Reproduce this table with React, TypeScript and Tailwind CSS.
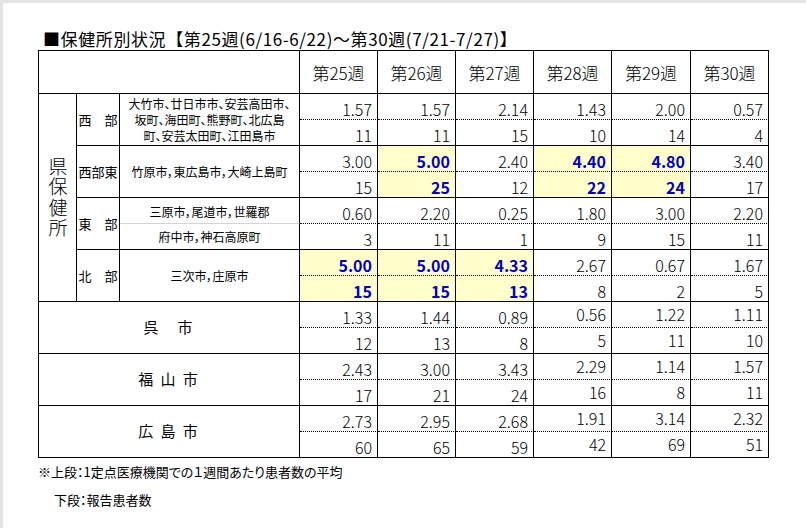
import React from "react";

type G = { top: string[]; bot: string[]; hl: number[] };

const seibu: G = { top: ["1.57", "1.57", "2.14", "1.43", "2.00", "0.57"], bot: ["11", "11", "15", "10", "14", "4"], hl: [] };
const seibuHigashi: G = { top: ["3.00", "5.00", "2.40", "4.40", "4.80", "3.40"], bot: ["15", "25", "12", "22", "24", "17"], hl: [1, 3, 4] };
const toubu: G = { top: ["0.60", "2.20", "0.25", "1.80", "3.00", "2.20"], bot: ["3", "11", "1", "9", "15", "11"], hl: [] };
const hokubu: G = { top: ["5.00", "5.00", "4.33", "2.67", "0.67", "1.67"], bot: ["15", "15", "13", "8", "2", "5"], hl: [0, 1, 2] };
const kure: G = { top: ["1.33", "1.44", "0.89", "0.56", "1.22", "1.11"], bot: ["12", "13", "8", "5", "11", "10"], hl: [] };
const fukuyama: G = { top: ["2.43", "3.00", "3.43", "2.29", "1.14", "1.57"], bot: ["17", "21", "24", "16", "8", "11"], hl: [] };
const hiroshima: G = { top: ["2.73", "2.95", "2.68", "1.91", "3.14", "2.32"], bot: ["60", "65", "59", "42", "69", "51"], hl: [] };

function V({ v, top, hl, up }: { v: string; top: boolean; hl: boolean; up: boolean }) {
  return (
    <div
      className={`flex justify-end border-r border-b border-black pr-[5px] text-[16px] leading-[20px] ${up ? "pt-[2px]" : "pt-[5px]"} ${top ? "[border-bottom-style:dotted]" : ""} ${hl ? "bg-[#ffffcc] font-bold text-[#0000cc]" : "font-light text-black"}`}
    >
      {v}
    </div>
  );
}

function Row({ g, top, lower }: { g: G; top: boolean; lower?: boolean }) {
  const vals = top ? g.top : g.bot;
  return (
    <>
      {vals.map((v, i) => (
        <V key={i} v={v} top={top} hl={g.hl.includes(i)} up={!!lower && i >= 3} />
      ))}
    </>
  );
}

const label = "flex items-center justify-center border-r border-b border-black";
const ctext = "flex items-center justify-center border-r border-b border-black text-center text-[12px] leading-[16px] [font-feature-settings:'palt']";

function City({ name, g }: { name: React.ReactNode; g: G }) {
  return (
    <>
      <div className={`${label} col-span-3 row-span-2 text-[15px] tracking-[2px]`}>{name}</div>
      <Row g={g} top lower />
      <Row g={g} top={false} lower />
    </>
  );
}

export default function App() {
  const weeks = ["第25週", "第26週", "第27週", "第28週", "第29週", "第30週"];
  return (
    <div className="w-[806px] h-[528px] overflow-hidden bg-white border-t-[3px] border-l-[3px] border-[#e4e4e4] font-['Noto_Sans_CJK_JP',sans-serif] text-black">
      <div className="pl-[35px] pt-[25px]">
        <div className="h-[22px] pl-[5px] text-[17px] leading-[22px] tracking-[0.6px] whitespace-nowrap">
          ■保健所別状況【第25週(6/16-6/22)～第30週(7/21-7/27)】
        </div>
        <div className="grid w-[731px] grid-cols-[38px_43px_180px_78px_78px_78px_78px_79px_78px] grid-rows-[43px_repeat(14,26px)] border-l border-t border-black">
          <div className="col-span-3 border-r border-b border-black" />
          {weeks.map((w) => (
            <div key={w} className={`${label} pt-[2px] text-[17px] font-light`}>
              {w}
            </div>
          ))}

          <div className={`${label} row-span-8 text-[19px] font-light`}>
            <span className="[writing-mode:vertical-rl] leading-[22px] tracking-[1.5px]">県保健所</span>
          </div>

          <div className={`${label} row-span-2 text-[13px]`}>西　部</div>
          <div className={`${ctext} row-span-2`}>
            大竹市、廿日市市、安芸高田市、
            <br />
            坂町、海田町、熊野町、北広島
            <br />
            町、安芸太田町、江田島市
          </div>
          <Row g={seibu} top />
          <Row g={seibu} top={false} />

          <div className={`${label} row-span-2 text-[13px]`}>西部東</div>
          <div className={`${ctext} row-span-2`}>竹原市，東広島市，大崎上島町</div>
          <Row g={seibuHigashi} top />
          <Row g={seibuHigashi} top={false} />

          <div className={`${label} row-span-2 text-[13px]`}>東　部</div>
          <div className="flex items-center justify-center border-r border-b border-r-black border-b-[#d4d4d4] pt-[2px] text-[12px] leading-[16px] [font-feature-settings:'palt']">
            三原市，尾道市，世羅郡
          </div>
          <Row g={toubu} top />
          <div className={`${ctext}`}>府中市，神石高原町</div>
          <Row g={toubu} top={false} />

          <div className={`${label} row-span-2 text-[13px]`}>北　部</div>
          <div className={`${ctext} row-span-2`}>三次市，庄原市</div>
          <Row g={hokubu} top />
          <Row g={hokubu} top={false} />

          <City name="呉　市" g={kure} />
          <City name="福 山 市" g={fukuyama} />
          <City name="広 島 市" g={hiroshima} />
        </div>
        <div className="mt-[4px] h-[20px] text-[13px] leading-[20px] whitespace-nowrap [font-feature-settings:'palt']">
          ※上段：1定点医療機関での１週間あたり患者数の平均
        </div>
        <div className="mt-[8px] h-[20px] pl-[16px] text-[13px] leading-[20px] whitespace-nowrap [font-feature-settings:'palt']">
          下段：報告患者数
        </div>
      </div>
    </div>
  );
}
